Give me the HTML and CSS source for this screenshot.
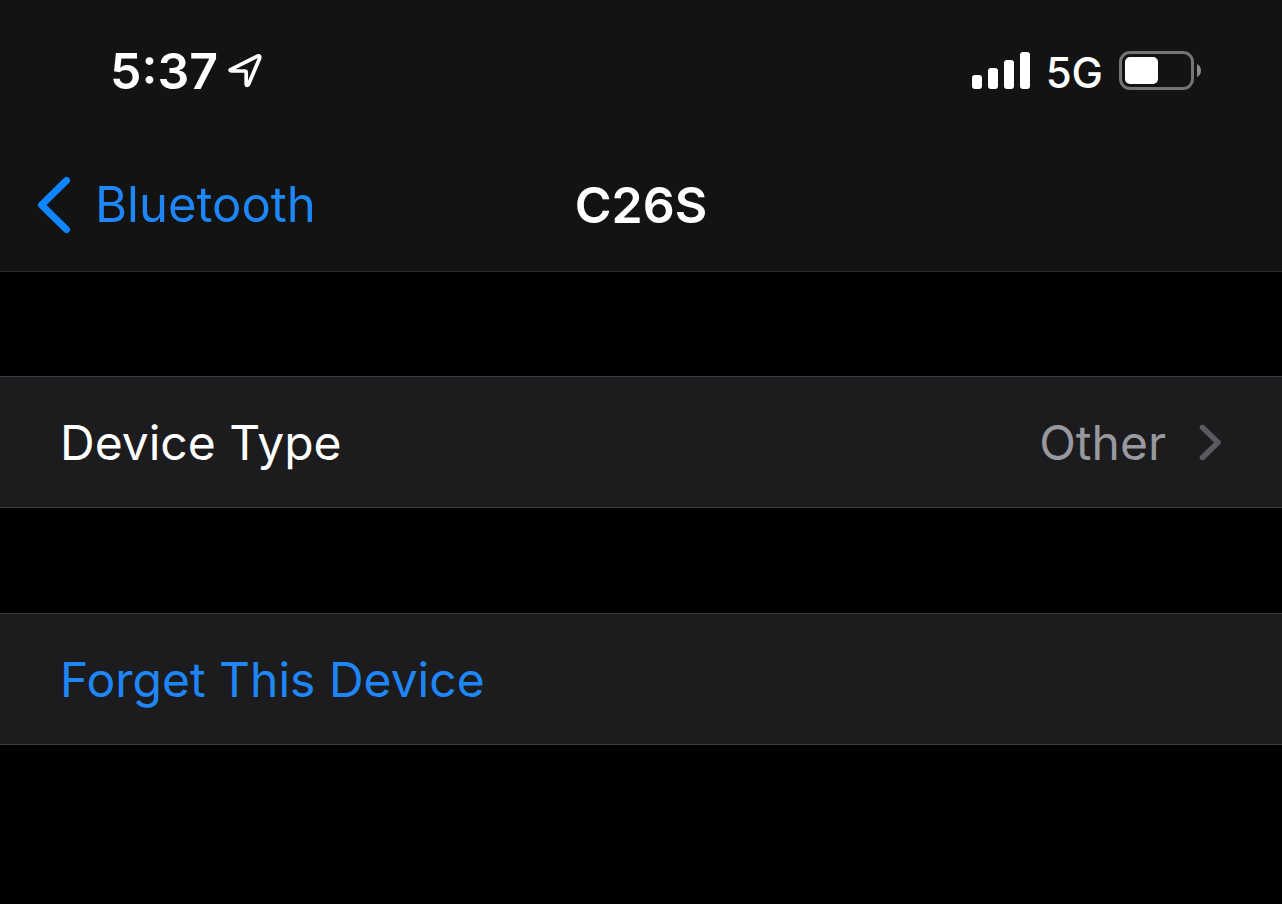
FILE: index.html
```html
<!DOCTYPE html>
<html lang="en">
<head>
<meta charset="utf-8">
<meta name="viewport" content="width=device-width, initial-scale=1">
<title>C26S</title>
<link rel="stylesheet" href="styles.css">
</head>
<body>
<header class="header">
  <div class="status">
    <div class="status-group status-left">
      <time class="clock">5:37</time>
      <svg class="location" width="36" height="36" viewBox="0 0 36 36" role="img" aria-label="Location in use">
        <path d="M2.600 16.600 29.500 3.100Q32.500 2 31.500 5.500L20.500 31.500Q19 33.500 18.200 31.500V19.500Q18.200 18 16.800 18L3.500 17.800Q1.300 17.500 2.600 16.600Z" fill="none" stroke="#fff" stroke-width="3.700" stroke-linejoin="round"/>
      </svg>
    </div>
    <div class="status-group status-right">
      <svg class="signal" width="58" height="38" viewBox="0 0 58 38" role="img" aria-label="Signal strength">
        <g fill="#fff">
          <rect x="0" y="23" width="10" height="14" rx="3"/>
          <rect x="16" y="16" width="10" height="21" rx="3"/>
          <rect x="32" y="8" width="10" height="29" rx="3"/>
          <rect x="48" y="0" width="10" height="37" rx="3"/>
        </g>
      </svg>
      <span class="network">5G</span>
      <svg class="battery" width="82" height="40" viewBox="0 0 82 40" role="img" aria-label="Battery half full">
        <rect x="1.500" y="1.500" width="72" height="36" rx="9.500" fill="none" stroke="#747474" stroke-width="3"/>
        <rect x="6" y="6" width="33" height="27" rx="5" fill="#fff"/>
        <path d="M78 13Q82 15 82 19.500T78 26Z" fill="#8a8a8a"/>
      </svg>
    </div>
  </div>
  <nav class="nav">
    <a class="back" href="#">
      <svg width="34" height="58" viewBox="0 0 34 58" aria-hidden="true">
        <path d="M29.500 4.500 4.500 29 29.500 53.500" fill="none" stroke="#0f84ff" stroke-width="7" stroke-linecap="round" stroke-linejoin="round"/>
      </svg>
      <span>Bluetooth</span>
    </a>
    <h1 class="title">C26S</h1>
  </nav>
</header>
<main class="settings">
  <button class="row" type="button">
    <span class="label">Device Type</span>
    <span class="value">Other</span>
    <svg width="24" height="38" viewBox="0 0 24 38" aria-hidden="true">
      <path d="M4.500 3.500 20 18.500 4.500 33.500" fill="none" stroke="#5b5b5f" stroke-width="5.500" stroke-linecap="round" stroke-linejoin="round"/>
    </svg>
  </button>
  <button class="row row-action" type="button">Forget This Device</button>
</main>
</body>
</html>
```
FILE: styles.css
```css
* {
  box-sizing: border-box;
}

body {
  margin: 0;
  background: #000;
  color: #fff;
  font-family: Inter, "Liberation Sans", sans-serif;
  font-size: 48px;
  line-height: 60px;
}

svg {
  display: block;
  flex: none;
}

.header {
  background: #131313;
  border-bottom: 1px solid #2c2c2e;
}

.status {
  display: flex;
  align-items: center;
  justify-content: space-between;
  padding: 41px 81px 40px 110px;
}

.status-group {
  display: flex;
  align-items: center;
}

.status-left {
  gap: 10px;
}

.status-right {
  gap: 16px;
}

.clock {
  font-size: 50px;
  font-weight: 600;
}

.network {
  padding-top: 4px;
  font-size: 42px;
  line-height: 56px;
  font-weight: 500;
}

.nav {
  display: grid;
  grid-template-columns: 1fr auto 1fr;
  align-items: center;
  padding: 34px 37px 36px;
}

.back {
  display: flex;
  align-items: center;
  gap: 24px;
  color: #1f86f8;
  font-size: 49px;
  text-decoration: none;
}

.title {
  margin: 0;
  font-size: 50px;
  font-weight: 600;
}

.settings {
  display: flex;
  flex-direction: column;
  gap: 105px;
  padding: 104px 0;
}

.row {
  display: flex;
  align-items: center;
  width: 100%;
  padding: 36px 60px 34px;
  border: 0 solid #3d3d41;
  border-width: 1px 0;
  background: #1c1c1e;
  color: #fff;
  font: inherit;
  text-align: left;
}

.row-action {
  color: #1f86f8;
}

.label {
  flex: 1;
}

.value {
  margin-right: 32px;
  color: #98989f;
}
```
